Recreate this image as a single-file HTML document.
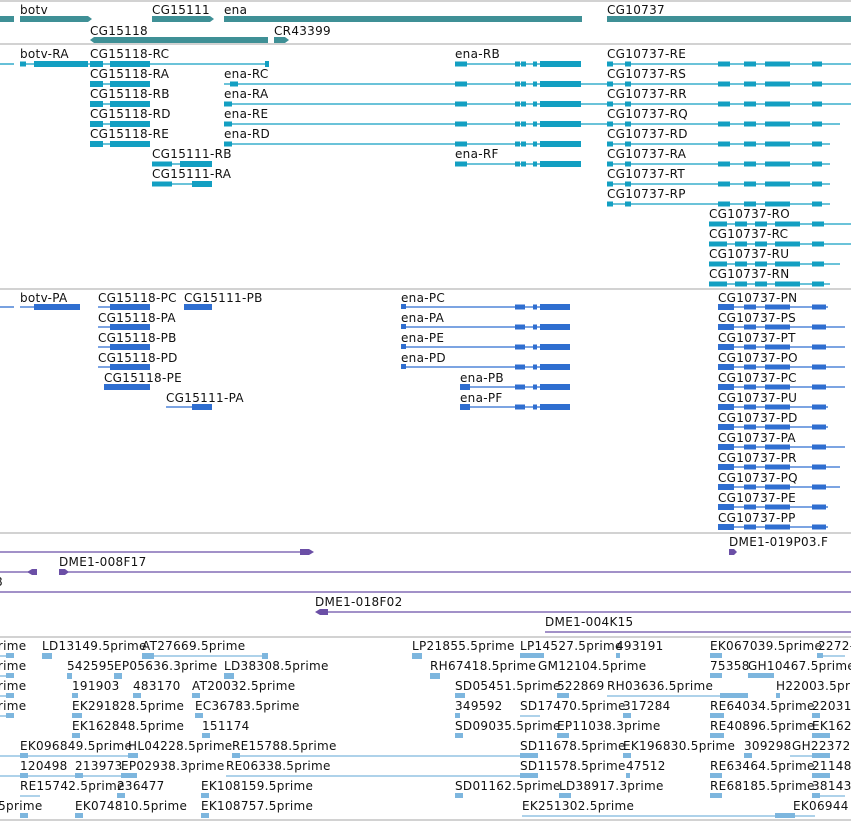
<!DOCTYPE html>
<html><head><meta charset="utf-8"><style>
html,body{margin:0;padding:0;background:#fff;width:851px;height:821px;overflow:hidden}
svg{display:block}
text{font-family:"DejaVu Sans","Liberation Sans",sans-serif;font-size:12px;fill:#111;letter-spacing:0.3px}
</style></head><body>
<svg width="851" height="821" viewBox="0 0 851 821" xmlns="http://www.w3.org/2000/svg">
<defs>
<g id="ena" fill="#139fc2"><rect x="455" y="-2.5" width="12" height="5"/><rect x="515" y="-2.5" width="5" height="5"/><rect x="521" y="-2.5" width="5" height="5"/><rect x="533" y="-2.5" width="4" height="5"/><rect x="540" y="-3" width="41" height="6"/></g>
<g id="cgt" fill="#139fc2"><rect x="607" y="-2.5" width="6" height="5"/><rect x="625" y="-2.5" width="6" height="5"/><rect x="718" y="-2.5" width="12" height="5"/><rect x="744" y="-2.5" width="12" height="5"/><rect x="765" y="-2.5" width="25" height="5"/><rect x="812" y="-2.5" width="10" height="5"/></g>
<g id="cgt2" fill="#139fc2"><rect x="709" y="-2.5" width="18" height="5"/><rect x="735" y="-2.5" width="12" height="5"/><rect x="755" y="-2.5" width="12" height="5"/><rect x="775" y="-2.5" width="25" height="5"/><rect x="812" y="-2.5" width="12" height="5"/></g>
<g id="cg18t" fill="#139fc2"><rect x="90" y="-3" width="13" height="6"/><rect x="110" y="-3" width="40" height="6"/></g>
<g id="cg18p" fill="#2f6ed0"><rect x="110" y="-3" width="40" height="6"/></g>
<g id="enp" fill="#2f6ed0"><rect x="515" y="-2.5" width="10" height="5"/><rect x="533" y="-2.5" width="4" height="5"/><rect x="540" y="-3" width="30" height="6"/></g>
<g id="cgp" fill="#2f6ed0"><rect x="718" y="-3" width="16" height="6"/><rect x="744" y="-2.5" width="12" height="5"/><rect x="765" y="-2.5" width="25" height="5"/><rect x="812" y="-2.5" width="14" height="5"/></g>
</defs>
<g stroke="#c4c4c4" stroke-width="1.5"><line x1="0" y1="1" x2="851" y2="1"/><line x1="0" y1="44" x2="851" y2="44"/><line x1="0" y1="289" x2="851" y2="289"/><line x1="0" y1="533" x2="851" y2="533"/><line x1="0" y1="637" x2="851" y2="637"/><line x1="0" y1="820" x2="851" y2="820"/></g>

<g fill="#3f9096">
<rect x="0" y="16" width="14" height="6"/><polygon points="20,16 88,16 92,19 88,22 20,22"/>
<polygon points="152,16 210,16 214,19 210,22 152,22"/><rect x="224" y="16" width="358" height="6"/><rect x="607" y="16" width="244" height="6"/>
<polygon points="94,37 268,37 268,43 94,43 90,40"/><polygon points="274,37 285,37 289,40 285,43 274,43"/>
</g>
<text x="20" y="14">botv</text><text x="152" y="14">CG15111</text><text x="224" y="14">ena</text><text x="607" y="14">CG10737</text>
<text x="90" y="35">CG15118</text><text x="274" y="35">CR43399</text>

<g stroke="#139fc2" stroke-width="1.3">
<line x1="0" y1="64" x2="14" y2="64"/><line x1="20" y1="64" x2="268" y2="64"/><line x1="455" y1="64" x2="580" y2="64"/><line x1="607" y1="64" x2="851" y2="64"/>
<line x1="90" y1="84" x2="150" y2="84"/><line x1="224" y1="84" x2="851" y2="84"/>
<line x1="90" y1="104" x2="150" y2="104"/><line x1="224" y1="104" x2="851" y2="104"/>
<line x1="90" y1="124" x2="150" y2="124"/><line x1="224" y1="124" x2="840" y2="124"/>
<line x1="90" y1="144" x2="150" y2="144"/><line x1="224" y1="144" x2="570" y2="144"/><line x1="607" y1="144" x2="830" y2="144"/>
<line x1="152" y1="164" x2="212" y2="164"/><line x1="455" y1="164" x2="575" y2="164"/><line x1="607" y1="164" x2="830" y2="164"/>
<line x1="152" y1="184" x2="212" y2="184"/><line x1="607" y1="184" x2="830" y2="184"/>
<line x1="607" y1="204" x2="830" y2="204"/>
<line x1="709" y1="224" x2="851" y2="224"/><line x1="709" y1="244" x2="851" y2="244"/><line x1="709" y1="264" x2="840" y2="264"/><line x1="709" y1="284" x2="830" y2="284"/>
</g>
<g fill="#139fc2"><rect x="34" y="61" width="54" height="6"/><rect x="20" y="61.5" width="6" height="5"/><rect x="230" y="81.5" width="8" height="5"/><rect x="224" y="101.5" width="8" height="5"/><rect x="224" y="121.5" width="8" height="5"/><rect x="224" y="141.5" width="8" height="5"/>
<rect x="152" y="161.5" width="20" height="5"/><rect x="180" y="161" width="32" height="6"/><rect x="152" y="181.5" width="20" height="5"/><rect x="192" y="181" width="20" height="6"/><rect x="265" y="61" width="4" height="6"/></g>
<use href="#cg18t" y="64"/><use href="#cg18t" y="84"/><use href="#cg18t" y="104"/><use href="#cg18t" y="124"/><use href="#cg18t" y="144"/>
<use href="#ena" y="64"/><use href="#ena" y="84"/><use href="#ena" y="104"/><use href="#ena" y="124"/><use href="#ena" y="144"/><use href="#ena" y="164"/>
<use href="#cgt" y="64"/><use href="#cgt" y="84"/><use href="#cgt" y="104"/><use href="#cgt" y="124"/><use href="#cgt" y="144"/><use href="#cgt" y="164"/><use href="#cgt" y="184"/><use href="#cgt" y="204"/>
<use href="#cgt2" y="224"/><use href="#cgt2" y="244"/><use href="#cgt2" y="264"/><use href="#cgt2" y="284"/>
<text x="20" y="58">botv-RA</text><text x="90" y="58">CG15118-RC</text><text x="455" y="58">ena-RB</text><text x="607" y="58">CG10737-RE</text>
<text x="90" y="78">CG15118-RA</text><text x="224" y="78">ena-RC</text><text x="607" y="78">CG10737-RS</text>
<text x="90" y="98">CG15118-RB</text><text x="224" y="98">ena-RA</text><text x="607" y="98">CG10737-RR</text>
<text x="90" y="118">CG15118-RD</text><text x="224" y="118">ena-RE</text><text x="607" y="118">CG10737-RQ</text>
<text x="90" y="138">CG15118-RE</text><text x="224" y="138">ena-RD</text><text x="607" y="138">CG10737-RD</text>
<text x="152" y="158">CG15111-RB</text><text x="455" y="158">ena-RF</text><text x="607" y="158">CG10737-RA</text>
<text x="152" y="178">CG15111-RA</text><text x="607" y="178">CG10737-RT</text>
<text x="607" y="198">CG10737-RP</text>
<text x="709" y="218">CG10737-RO</text><text x="709" y="238">CG10737-RC</text><text x="709" y="258">CG10737-RU</text><text x="709" y="278">CG10737-RN</text>

<g stroke="#2f6ed0" stroke-width="1.3">
<line x1="0" y1="307" x2="14" y2="307"/><line x1="20" y1="307" x2="80" y2="307"/><line x1="98" y1="307" x2="150" y2="307"/><line x1="184" y1="307" x2="212" y2="307"/><line x1="401" y1="307" x2="570" y2="307"/><line x1="718" y1="307" x2="828" y2="307"/>
<line x1="98" y1="327" x2="150" y2="327"/><line x1="401" y1="327" x2="570" y2="327"/><line x1="718" y1="327" x2="845" y2="327"/>
<line x1="98" y1="347" x2="150" y2="347"/><line x1="401" y1="347" x2="570" y2="347"/><line x1="718" y1="347" x2="845" y2="347"/>
<line x1="98" y1="367" x2="150" y2="367"/><line x1="401" y1="367" x2="570" y2="367"/><line x1="718" y1="367" x2="845" y2="367"/>
<line x1="104" y1="387" x2="150" y2="387"/><line x1="460" y1="387" x2="570" y2="387"/><line x1="718" y1="387" x2="845" y2="387"/>
<line x1="166" y1="407" x2="212" y2="407"/><line x1="460" y1="407" x2="570" y2="407"/><line x1="718" y1="407" x2="828" y2="407"/>
<line x1="718" y1="427" x2="828" y2="427"/><line x1="718" y1="447" x2="845" y2="447"/><line x1="718" y1="467" x2="840" y2="467"/><line x1="718" y1="487" x2="840" y2="487"/><line x1="718" y1="507" x2="828" y2="507"/><line x1="718" y1="527" x2="828" y2="527"/>
</g>
<g fill="#2f6ed0"><rect x="34" y="304" width="46" height="6"/><rect x="184" y="304" width="28" height="6"/><rect x="192" y="404" width="20" height="6"/><rect x="460" y="384" width="10" height="6"/><rect x="460" y="404" width="10" height="6"/><rect x="401" y="304" width="5" height="5"/><rect x="401" y="324" width="5" height="5"/><rect x="401" y="344" width="5" height="5"/><rect x="401" y="364" width="5" height="5"/><rect x="104" y="384" width="8" height="6"/></g>
<use href="#cg18p" y="307"/><use href="#cg18p" y="327"/><use href="#cg18p" y="347"/><use href="#cg18p" y="367"/><use href="#cg18p" y="387"/>
<use href="#enp" y="307"/><use href="#enp" y="327"/><use href="#enp" y="347"/><use href="#enp" y="367"/><use href="#enp" y="387"/><use href="#enp" y="407"/>
<use href="#cgp" y="307"/><use href="#cgp" y="327"/><use href="#cgp" y="347"/><use href="#cgp" y="367"/><use href="#cgp" y="387"/><use href="#cgp" y="407"/><use href="#cgp" y="427"/><use href="#cgp" y="447"/><use href="#cgp" y="467"/><use href="#cgp" y="487"/><use href="#cgp" y="507"/><use href="#cgp" y="527"/>
<text x="20" y="302">botv-PA</text><text x="98" y="302">CG15118-PC</text><text x="184" y="302">CG15111-PB</text><text x="401" y="302">ena-PC</text><text x="718" y="302">CG10737-PN</text>
<text x="98" y="322">CG15118-PA</text><text x="401" y="322">ena-PA</text><text x="718" y="322">CG10737-PS</text>
<text x="98" y="342">CG15118-PB</text><text x="401" y="342">ena-PE</text><text x="718" y="342">CG10737-PT</text>
<text x="98" y="362">CG15118-PD</text><text x="401" y="362">ena-PD</text><text x="718" y="362">CG10737-PO</text>
<text x="104" y="382">CG15118-PE</text><text x="460" y="382">ena-PB</text><text x="718" y="382">CG10737-PC</text>
<text x="166" y="402">CG15111-PA</text><text x="460" y="402">ena-PF</text><text x="718" y="402">CG10737-PU</text>
<text x="718" y="422">CG10737-PD</text><text x="718" y="442">CG10737-PA</text><text x="718" y="462">CG10737-PR</text><text x="718" y="482">CG10737-PQ</text><text x="718" y="502">CG10737-PE</text><text x="718" y="522">CG10737-PP</text>

<g stroke="#6b4fa6" stroke-width="1.3">
<line x1="0" y1="552" x2="305" y2="552"/><line x1="0" y1="572" x2="30" y2="572"/><line x1="59" y1="572" x2="851" y2="572"/><line x1="0" y1="592" x2="851" y2="592"/><line x1="325" y1="612" x2="851" y2="612"/><line x1="545" y1="632" x2="851" y2="632"/>
</g>
<g fill="#6b4fa6"><polygon points="300,549 309,549 314,552 309,555 300,555"/><polygon points="27,572 32,569 37,569 37,575 32,575"/><polygon points="59,569 65,569 69,572 65,575 59,575"/><polygon points="315,612 320,609 328,609 328,615 320,615"/><polygon points="729,549 734,549 737,552 734,555 729,555"/></g>
<text x="729" y="546">DME1-019P03.F</text><text x="59" y="566">DME1-008F17</text><text x="-5" y="586">8</text><text x="315" y="606">DME1-018F02</text><text x="545" y="626">DME1-004K15</text>

<g stroke="#7db6de" stroke-width="1.3">
<line x1="0" y1="656" x2="14" y2="656"/><line x1="142" y1="656" x2="268" y2="656"/><line x1="520" y1="656" x2="544" y2="656"/><line x1="817" y1="656" x2="845" y2="656"/>
<line x1="0" y1="676" x2="14" y2="676"/><line x1="748" y1="676" x2="770" y2="676"/>
<line x1="0" y1="696" x2="14" y2="696"/><line x1="607" y1="696" x2="748" y2="696"/>
<line x1="0" y1="716" x2="14" y2="716"/><line x1="520" y1="716" x2="540" y2="716"/>
<line x1="0" y1="756" x2="137" y2="756"/><line x1="232" y1="756" x2="535" y2="756"/><line x1="790" y1="756" x2="830" y2="756"/>
<line x1="0" y1="776" x2="137" y2="776"/><line x1="226" y1="776" x2="535" y2="776"/>
<line x1="20" y1="796" x2="40" y2="796"/><line x1="812" y1="796" x2="845" y2="796"/>
<line x1="522" y1="816" x2="815" y2="816"/>
</g>
<g fill="#7db6de">
<rect x="42" y="653" width="10" height="6"/><rect x="142" y="653" width="12" height="6"/><rect x="262" y="653" width="6" height="6"/><rect x="412" y="653" width="10" height="6"/><rect x="520" y="653" width="24" height="5"/><rect x="616" y="653" width="4" height="5"/><rect x="710" y="653" width="12" height="5"/><rect x="817" y="653" width="6" height="5"/><rect x="6" y="653" width="8" height="5"/>
<rect x="67" y="673" width="5" height="6"/><rect x="114" y="673" width="8" height="6"/><rect x="224" y="673" width="10" height="6"/><rect x="430" y="673" width="10" height="6"/><rect x="710" y="673" width="12" height="5"/><rect x="748" y="673" width="26" height="5"/><rect x="6" y="673" width="8" height="5"/>
<rect x="72" y="693" width="6" height="5"/><rect x="133" y="693" width="8" height="5"/><rect x="192" y="693" width="8" height="5"/><rect x="455" y="693" width="10" height="5"/><rect x="557" y="693" width="12" height="5"/><rect x="720" y="693" width="28" height="5"/><rect x="6" y="693" width="8" height="5"/><rect x="776" y="693" width="4" height="5"/>
<rect x="72" y="713" width="10" height="5"/><rect x="195" y="713" width="8" height="5"/><rect x="455" y="713" width="5" height="5"/><rect x="623" y="713" width="8" height="5"/><rect x="710" y="713" width="14" height="5"/><rect x="812" y="713" width="8" height="5"/><rect x="6" y="713" width="8" height="5"/>
<rect x="72" y="733" width="8" height="5"/><rect x="202" y="733" width="8" height="5"/><rect x="455" y="733" width="8" height="5"/><rect x="557" y="733" width="12" height="5"/><rect x="710" y="733" width="14" height="5"/><rect x="812" y="733" width="18" height="5"/>
<rect x="20" y="753" width="8" height="5"/><rect x="128" y="753" width="10" height="5"/><rect x="232" y="753" width="8" height="5"/><rect x="520" y="753" width="18" height="5"/><rect x="623" y="753" width="8" height="5"/><rect x="744" y="753" width="8" height="5"/><rect x="812" y="753" width="18" height="5"/>
<rect x="20" y="773" width="8" height="5"/><rect x="75" y="773" width="8" height="5"/><rect x="121" y="773" width="16" height="5"/><rect x="520" y="773" width="18" height="5"/><rect x="626" y="773" width="4" height="5"/><rect x="710" y="773" width="12" height="5"/><rect x="812" y="773" width="18" height="5"/>
<rect x="117" y="793" width="8" height="5"/><rect x="201" y="793" width="8" height="5"/><rect x="455" y="793" width="8" height="5"/><rect x="559" y="793" width="12" height="5"/><rect x="710" y="793" width="12" height="5"/><rect x="812" y="793" width="8" height="5"/>
<rect x="20" y="813" width="8" height="5"/><rect x="75" y="813" width="8" height="5"/><rect x="201" y="813" width="8" height="5"/><rect x="775" y="813" width="20" height="5"/>
</g>
<text x="-10" y="650">prime</text><text x="42" y="650">LD13149.5prime</text><text x="142" y="650">AT27669.5prime</text><text x="412" y="650">LP21855.5prime</text><text x="520" y="650">LP14527.5prime</text><text x="616" y="650">493191</text><text x="710" y="650">EK067039.5prime</text><text x="818" y="650">2272-</text>
<text x="-10" y="670">prime</text><text x="67" y="670">542595</text><text x="114" y="670">EP05636.3prime</text><text x="224" y="670">LD38308.5prime</text><text x="430" y="670">RH67418.5prime</text><text x="538" y="670">GM12104.5prime</text><text x="710" y="670">75358</text><text x="748" y="670">GH10467.5prime</text>
<text x="-10" y="690">prime</text><text x="72" y="690">191903</text><text x="133" y="690">483170</text><text x="192" y="690">AT20032.5prime</text><text x="455" y="690">SD05451.5prime</text><text x="557" y="690">522869</text><text x="607" y="690">RH03636.5prime</text><text x="776" y="690">H22003.5prime</text>
<text x="-10" y="710">prime</text><text x="72" y="710">EK291828.5prime</text><text x="195" y="710">EC36783.5prime</text><text x="455" y="710">349592</text><text x="520" y="710">SD17470.5prime</text><text x="623" y="710">317284</text><text x="710" y="710">RE64034.5prime</text><text x="812" y="710">22031</text>
<text x="72" y="730">EK162848.5prime</text><text x="202" y="730">151174</text><text x="455" y="730">SD09035.5prime</text><text x="557" y="730">EP11038.3prime</text><text x="710" y="730">RE40896.5prime</text><text x="812" y="730">EK162</text>
<text x="20" y="750">EK096849.5prime</text><text x="128" y="750">HL04228.5prime</text><text x="232" y="750">RE15788.5prime</text><text x="520" y="750">SD11678.5prime</text><text x="623" y="750">EK196830.5prime</text><text x="744" y="750">309298</text><text x="792" y="750">GH22372.</text>
<text x="20" y="770">120498</text><text x="75" y="770">213973</text><text x="121" y="770">EP02938.3prime</text><text x="226" y="770">RE06338.5prime</text><text x="520" y="770">SD11578.5prime</text><text x="626" y="770">47512</text><text x="710" y="770">RE63464.5prime</text><text x="812" y="770">21148</text>
<text x="20" y="790">RE15742.5prime</text><text x="117" y="790">236477</text><text x="201" y="790">EK108159.5prime</text><text x="455" y="790">SD01162.5prime</text><text x="559" y="790">LD38917.3prime</text><text x="710" y="790">RE68185.5prime</text><text x="812" y="790">38143</text>
<text x="-6" y="810">.5prime</text><text x="75" y="810">EK074810.5prime</text><text x="201" y="810">EK108757.5prime</text><text x="522" y="810">EK251302.5prime</text><text x="793" y="810">EK06944</text>
</svg>
</body></html>
